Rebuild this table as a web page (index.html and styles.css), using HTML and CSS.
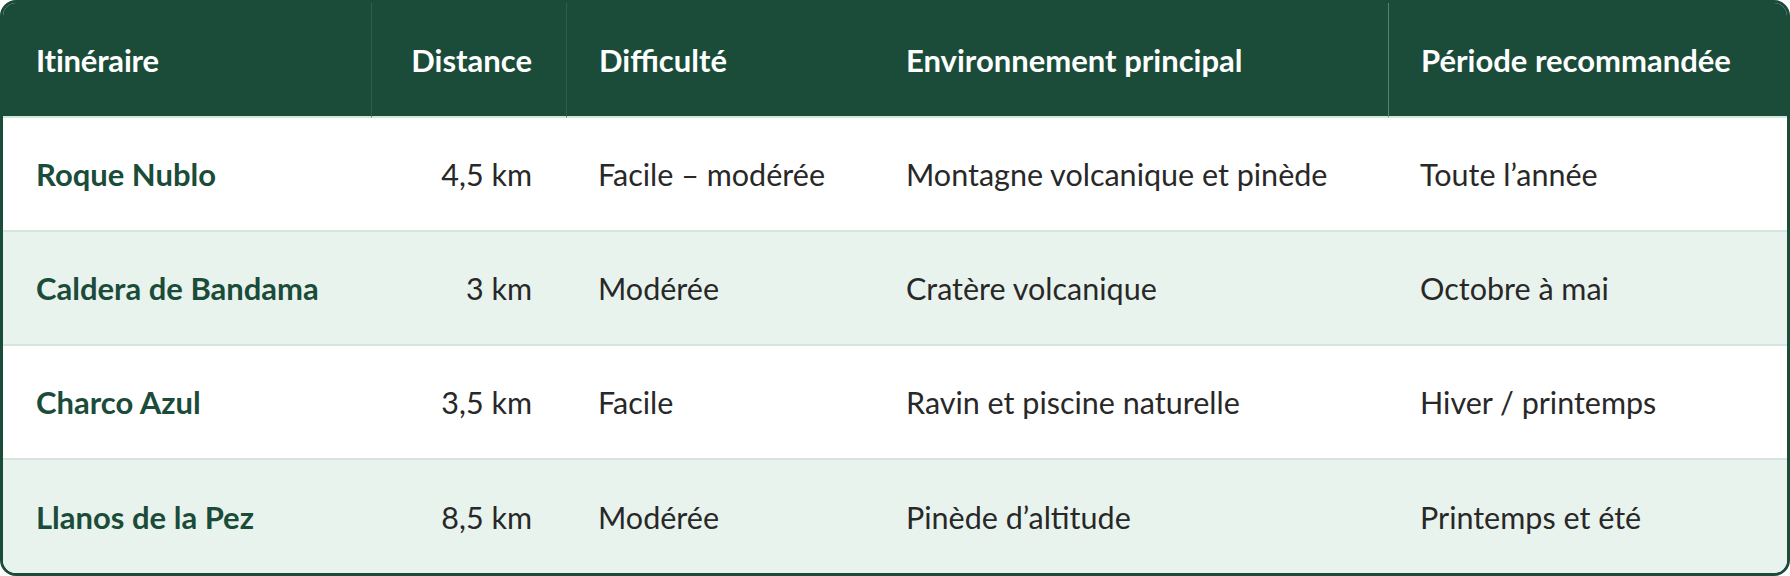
FILE: index.html
```html
<!DOCTYPE html>
<html lang="fr">
<head>
<meta charset="utf-8">
<title>Itinéraires de randonnée</title>
<link rel="stylesheet" href="styles.css">
</head>
<body>
<div class="card">
  <table class="routes">
    <colgroup>
      <col class="c-name">
      <col class="c-dist">
      <col class="c-diff">
      <col class="c-env">
      <col class="c-period">
    </colgroup>
    <thead>
      <tr>
        <th class="h-name">Itinéraire</th>
        <th class="h-dist num sep">Distance</th>
        <th class="h-diff sep">Difficulté</th>
        <th class="h-env">Environnement principal</th>
        <th class="h-period sep-light">Période recommandée</th>
      </tr>
    </thead>
    <tbody>
      <tr>
        <td class="name">Roque Nublo</td>
        <td class="num">4,5 km</td>
        <td>Facile – modérée</td>
        <td>Montagne volcanique et pinède</td>
        <td>Toute l’année</td>
      </tr>
      <tr class="alt">
        <td class="name">Caldera de Bandama</td>
        <td class="num">3 km</td>
        <td>Modérée</td>
        <td>Cratère volcanique</td>
        <td>Octobre à mai</td>
      </tr>
      <tr>
        <td class="name">Charco Azul</td>
        <td class="num">3,5 km</td>
        <td>Facile</td>
        <td>Ravin et piscine naturelle</td>
        <td>Hiver / printemps</td>
      </tr>
      <tr class="alt last">
        <td class="name">Llanos de la Pez</td>
        <td class="num">8,5 km</td>
        <td>Modérée</td>
        <td>Pinède d’altitude</td>
        <td>Printemps et été</td>
      </tr>
    </tbody>
  </table>
</div>
</body>
</html>
```
FILE: styles.css
```css
html, body {
  margin: 0;
  padding: 0;
  background: #ffffff;
}

body {
  font-family: Lato, "DejaVu Sans Condensed", sans-serif;
  color: #262626;
}

.card {
  width: 1790px;
  height: 576px;
  box-sizing: border-box;
  border: 3px solid #1b4c3a;
  border-radius: 16px;
  overflow: hidden;
  background: #ffffff;
}

.routes {
  width: 1784px;
  table-layout: fixed;
  border-collapse: separate;
  border-spacing: 0;
}

.c-name { width: 368px; }
.c-dist { width: 195px; }
.c-diff { width: 308px; }
.c-env { width: 514px; }
.c-period { width: 399px; }

.routes th {
  height: 115px;
  box-sizing: border-box;
  padding: 0 32px;
  background: #1b4c3a;
  color: #ffffff;
  font-size: 31px;
  font-weight: 700;
  text-align: left;
  vertical-align: middle;
  border-bottom: 2px solid #cfe6da;
  white-space: nowrap;
}

.routes th.h-name {
  padding-left: 33px;
  letter-spacing: -0.2px;
}

.routes th.sep {
  border-left: 1px solid #2b5e4b;
}

.routes th.sep-light {
  border-left: 1px solid #4f8470;
}

.routes td {
  height: 114px;
  box-sizing: border-box;
  padding: 0 32px;
  font-size: 30.5px;
  font-weight: 400;
  color: #282828;
  vertical-align: middle;
  border-bottom: 2px solid #d6e5dd;
  white-space: nowrap;
}

.routes tr.last td {
  height: 113px;
  border-bottom: 0;
}

.routes td.name {
  padding-left: 33px;
  font-size: 31px;
  font-weight: 700;
  color: #1b4c3a;
}

.routes .num {
  text-align: right;
  padding-right: 34px;
}

.routes tr.alt td {
  background: #e9f3ed;
}
```
